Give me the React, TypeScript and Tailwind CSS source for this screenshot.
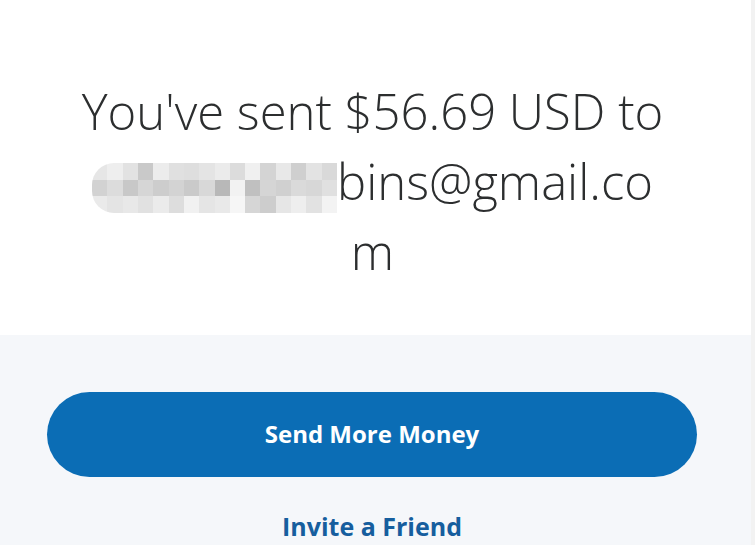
const mosaic: string[][] = [
  ["#e6e6e6", "#eeeeee", "#e2e2e2", "#c9c9c9", "#ececec", "#e0e0e0", "#dedede", "#e4e4e4", "#ebebeb", "#dcdcdc", "#f0f0f0", "#d4d4d4", "#e8e8e8", "#cfcfcf", "#e3e3e3", "#d9d9d9"],
  ["#d2d2d2", "#dcdcdc", "#c8c8c8", "#d6d6d6", "#cdcdcd", "#d3d3d3", "#cacaca", "#d8d8d8", "#b8b8b8", "#f2f2f2", "#c0c0c0", "#d5d5d5", "#d0d0d0", "#dadada", "#d7d7d7", "#e0e0e0"],
  ["#eaeaea", "#e4e4e4", "#e8e8e8", "#e1e1e1", "#ebebeb", "#dddddd", "#f1f1f1", "#e5e5e5", "#e9e9e9", "#f6f6f6", "#d6d6d6", "#cdcdcd", "#e6e6e6", "#eeeeee", "#e2e2e2", "#f3f3f3"],
];

// pixelated blur over the hidden part of the address
function Mosaic() {
  return (
    <span className="inline-block h-[50px] w-[245px] overflow-hidden rounded-l-[22px] align-[-13px]">
      {mosaic.map((row, i) => (
        <span key={i} className="flex h-1/3">
          {row.map((c, j) => (
            <span key={j} className="flex-1" style={{ backgroundColor: c }} />
          ))}
        </span>
      ))}
    </span>
  );
}

export default function App() {
  return (
    <div className="flex h-[545px] w-[755px] overflow-hidden bg-[#f2f2f2] font-['Open_Sans',sans-serif]">
      <div className="flex w-[751px] flex-col">
        <section className="flex h-[336px] justify-center bg-white pr-[6px] pt-[76px]">
          <h1 className="w-[590px] text-center text-[49px] font-light leading-[70px] text-[#2c2e2f] [word-break:break-all]">
            You've sent $56.69 USD to <Mosaic />bins@gmail.com
          </h1>
        </section>

        <section className="flex flex-1 flex-col items-center bg-[#f5f7fa] pl-[47px] pr-[54px] pt-[57px]">
          <button className="flex h-[85px] w-full items-center justify-center rounded-full bg-[#0b6db5] text-[24px] font-bold text-white">
            Send More Money
          </button>
          <a className="mt-[31px] text-[25px] font-bold text-[#165e9e]">Invite a Friend</a>
        </section>
      </div>
    </div>
  );
}
